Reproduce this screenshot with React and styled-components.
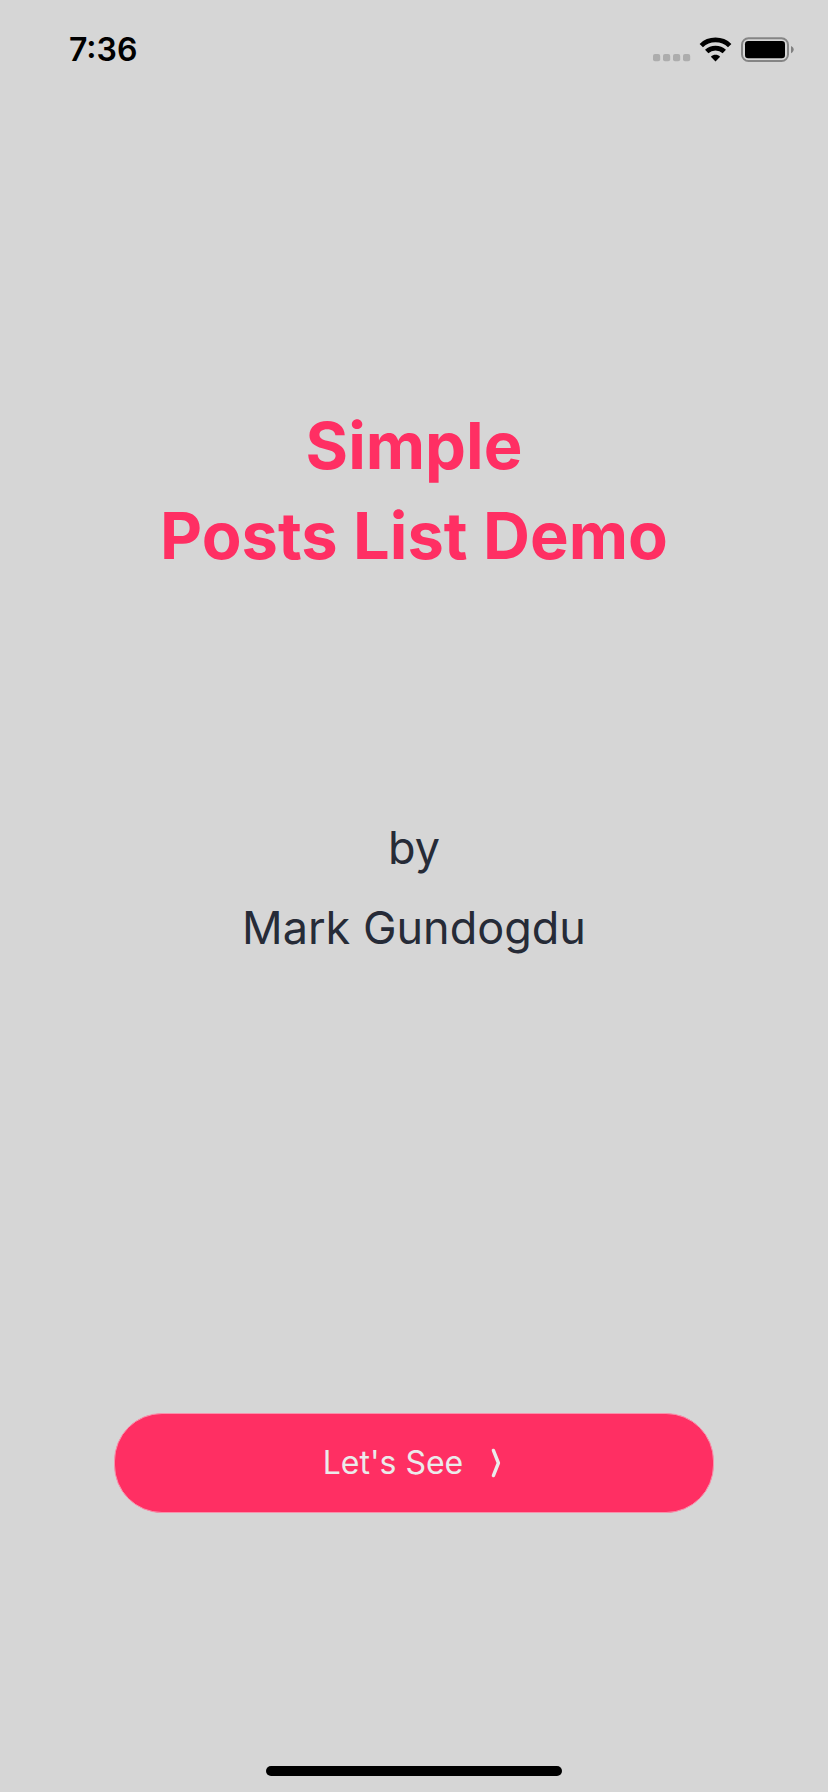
import React from "react";
import styled, { createGlobalStyle } from "styled-components";

const GlobalStyle = createGlobalStyle`
  *, *::before, *::after { box-sizing: border-box; }
  body {
    margin: 0;
    background: #d6d6d6;
    font-family: Inter, "Liberation Sans", sans-serif;
  }
`;

const Screen = styled.div`
  display: flex;
  flex-direction: column;
  min-height: 100vh;
  background: #d6d6d6;
`;

const StatusBar = styled.header`
  display: flex;
  align-items: center;
  justify-content: space-between;
  height: 100px;
  padding: 0 34px 0 69px;
`;

const Time = styled.time`
  color: #000;
  font-size: 32px;
  font-weight: 600;
  line-height: 40px;
`;

const StatusIcons = styled.div`
  display: flex;
  align-items: center;
  gap: 8px;
`;

const Welcome = styled.main`
  display: flex;
  flex: 1;
  flex-direction: column;
  align-items: center;
  padding: 301px 114px 0;
  text-align: center;
`;

const Title = styled.h1`
  margin: 0;
  color: #ff2f63;
  font-size: 65px;
  font-weight: 700;
  line-height: 90px;
  white-space: nowrap;
`;

const Author = styled.p`
  margin: 227px 0 0;
  color: #262b37;
  font-size: 45px;
  font-weight: 400;
  line-height: 80px;
  white-space: nowrap;
`;

const StartButton = styled.button`
  display: flex;
  align-items: center;
  justify-content: center;
  gap: 28px;
  width: 100%;
  height: 100px;
  margin-top: auto;
  padding: 0 4px 0 0;
  border: 1px solid #f991ac;
  border-radius: 48px;
  background: #ff2f63;
  color: #ebebeb;
  font-family: inherit;
  font-size: 32px;
  font-weight: 400;
  line-height: 40px;
  cursor: pointer;
`;

const HomeArea = styled.footer`
  display: flex;
  align-items: flex-end;
  justify-content: center;
  height: 279px;
  padding-bottom: 16px;
`;

const HomeIndicator = styled.div`
  width: 296px;
  height: 10px;
  border-radius: 5px;
  background: #000;
`;

function CellularIcon() {
  return (
    <svg width="38" height="26" viewBox="0 0 38 26" fill="#adadad" aria-hidden="true">
      {[0, 10, 20, 30].map((x) => (
        <rect key={x} x={x} y="17" width="7.2" height="7.2" rx="2" />
      ))}
    </svg>
  );
}

function WifiIcon() {
  return (
    <svg width="34" height="26" viewBox="0 0 34 26" aria-hidden="true">
      <g fill="none" stroke="#000" strokeWidth="4.8">
        <path d="M2.3 8.6C10 1 23 1 30.7 8.6" />
        <path d="M7.7 14.6C12.5 10 20.5 10 25.3 14.6" />
      </g>
      <path d="M16.5 24.4L11.9 19.8C14.4 17.2 18.6 17.2 21.1 19.8Z" />
    </svg>
  );
}

function BatteryIcon() {
  return (
    <svg width="53" height="26" viewBox="0 0 53 26" aria-hidden="true">
      <rect x="1" y="1.2" width="46" height="22.8" rx="6.5" fill="none" stroke="#858585" strokeWidth="2" />
      <rect x="4" y="4" width="40" height="17.2" rx="3.2" />
      <path d="M50 9C53.6 10.3 53.6 14.9 50 16.2Z" fill="#808080" />
    </svg>
  );
}

function ChevronIcon() {
  return (
    <svg width="10" height="30" viewBox="0 0 10 30" fill="none" stroke="#ebebeb" strokeWidth="3.4" strokeLinecap="round" strokeLinejoin="round" aria-hidden="true">
      <path d="M2.4 2.4L7.4 15L2.4 27.6" />
    </svg>
  );
}

export default function App() {
  return (
    <>
      <GlobalStyle />
      <Screen>
        <StatusBar>
          <Time>7:36</Time>
          <StatusIcons>
            <CellularIcon />
            <WifiIcon />
            <BatteryIcon />
          </StatusIcons>
        </StatusBar>
        <Welcome>
          <Title>
            Simple
            <br />
            Posts List Demo
          </Title>
          <Author>
            by
            <br />
            Mark Gundogdu
          </Author>
          <StartButton type="button">
            Let's See
            <ChevronIcon />
          </StartButton>
        </Welcome>
        <HomeArea>
          <HomeIndicator />
        </HomeArea>
      </Screen>
    </>
  );
}
